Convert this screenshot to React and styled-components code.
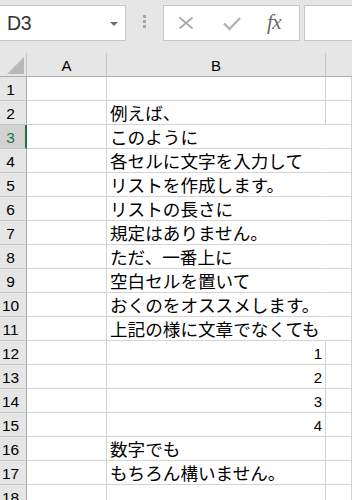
import React from "react";
import styled, { createGlobalStyle } from "styled-components";

const Global = createGlobalStyle`
  html, body { margin: 0; padding: 0; background: #ffffff; overflow: hidden; }
  * { box-sizing: border-box; }
`;

const Sheet = styled.div`
  width: 352px;
  height: 500px;
  overflow: hidden;
  background: #ffffff;
  font-family: "Liberation Sans", Arial, sans-serif;
`;

const TopBar = styled.div`
  height: 53px;
  background: #e6e6e6;
  display: flex;
  align-items: flex-start;
  padding-top: 5px;
`;

const NameBox = styled.div`
  width: 126px;
  height: 36px;
  background: #ffffff;
  border: 1px solid #c6c6c6;
  border-left: none;
  display: flex;
  align-items: center;
  justify-content: space-between;
  padding: 0 7px 0 7px;
  color: #333333;
  font-size: 19.5px;
  letter-spacing: -0.3px;
`;

const DropArrow = styled.span`
  width: 0;
  height: 0;
  border-left: 4px solid transparent;
  border-right: 4px solid transparent;
  border-top: 4px solid #6e6e6e;
  margin-top: 2px;
`;

const Grip = styled.div`
  width: 37px;
  height: 36px;
  display: flex;
  flex-direction: column;
  align-items: center;
  justify-content: center;
  gap: 2px;
  padding-right: 1px;
  padding-bottom: 3px;
`;

const GripDot = styled.span`
  width: 3px;
  height: 3px;
  background: #a6a6a6;
`;

const FormulaBox = styled.div`
  width: 137px;
  height: 36px;
  background: #ffffff;
  border: 1px solid #c6c6c6;
  display: flex;
  align-items: center;
  padding-left: 14px;
  gap: 0;
`;

const IconSlot = styled.div`
  width: ${(p) => p.$w}px;
  display: flex;
  align-items: center;
  justify-content: flex-start;
`;

const Fx = styled.span`
  font-family: "Liberation Serif", "DejaVu Serif", serif;
  font-style: italic;
  font-size: 21px;
  color: #6a6a6a;
  margin-top: -2px;
  letter-spacing: -0.5px;
`;

const InputBox = styled.div`
  flex: 1;
  height: 36px;
  margin-left: 4px;
  background: #ffffff;
  border: 1px solid #c6c6c6;
  border-right: none;
`;

const COLS = "27px 80px 219px 1fr";

const HeaderRow = styled.div`
  display: grid;
  grid-template-columns: ${COLS};
  height: 24px;
  background: #e6e6e6;
  border-bottom: 1px solid #ababab;
`;

const Corner = styled.div`
  position: relative;
  border-right: 1px solid #c6c6c6;
`;

const CornerTri = styled.span`
  position: absolute;
  right: 2px;
  bottom: 2px;
  width: 0;
  height: 0;
  border-left: 17px solid transparent;
  border-bottom: 17px solid #b8b8b8;
`;

const ColHead = styled.div`
  border-right: ${(p) => (p.$last ? "none" : "1px solid #c6c6c6")};
  display: flex;
  align-items: center;
  justify-content: center;
  font-size: 15px;
  color: #000000;
  padding-top: 2px;
`;

const Row = styled.div`
  display: grid;
  grid-template-columns: ${COLS};
  height: 24px;
`;

const RowHead = styled.div`
  background: ${(p) => (p.$sel ? "#d2d2d2" : "#e6e6e6")};
  border-right: ${(p) => (p.$sel ? "2px solid #217346" : "1px solid #ababab")};
  border-bottom: 1px solid #c4c4c4;
  color: ${(p) => (p.$sel ? "#217346" : "#000000")};
  font-size: 15.5px;
  display: flex;
  align-items: center;
  justify-content: center;
  padding-right: ${(p) => (p.$sel ? "4px" : "5px")};
  padding-top: 2px;
`;

const Cell = styled.div`
  border-right: ${(p) => (p.$noRight ? "1px solid transparent" : "1px solid #d4d4d4")};
  border-bottom: 1px solid #d4d4d4;
  display: flex;
  align-items: center;
  justify-content: ${(p) => (p.$num ? "flex-end" : "flex-start")};
  padding: 1px 3px 0 3px;
  white-space: nowrap;
  overflow: visible;
  position: relative;
  z-index: ${(p) => (p.$text ? 1 : 0)};
  font-family: ${(p) =>
    p.$num
      ? '"Liberation Sans", Arial, sans-serif'
      : '"Noto Sans CJK JP", "Noto Sans CJK SC", sans-serif'};
  font-size: ${(p) => (p.$num ? "15px" : "17.6px")};
  line-height: 1;
  color: #000000;
`;

const CrossIcon = () => (
  <svg width="16" height="14" viewBox="0 0 16 14">
    <path d="M1.5 1.5 L14.5 12.5 M14.5 1.5 L1.5 12.5" stroke="#ababab" strokeWidth="1.8" fill="none" />
  </svg>
);

const CheckIcon = () => (
  <svg width="18" height="15" viewBox="0 0 18 15">
    <path d="M1 7.5 L6.5 13 L17 2" stroke="#b3b3b3" strokeWidth="2.4" fill="none" />
  </svg>
);

const rows = [
  { b: "" },
  { b: "例えば、" },
  { b: "このように", sel: true },
  { b: "各セルに文字を入力して" },
  { b: "リストを作成します。" },
  { b: "リストの長さに" },
  { b: "規定はありません。" },
  { b: "ただ、一番上に" },
  { b: "空白セルを置いて" },
  { b: "おくのをオススメします。" },
  { b: "上記の様に文章でなくても" },
  { b: "1", num: true },
  { b: "2", num: true },
  { b: "3", num: true },
  { b: "4", num: true },
  { b: "数字でも" },
  { b: "もちろん構いません。" },
  { b: "" },
];

export default function App() {
  return (
    <Sheet>
      <Global />
      <TopBar>
        <NameBox>
          <span>D3</span>
          <DropArrow />
        </NameBox>
        <Grip>
          <GripDot />
          <GripDot />
          <GripDot />
        </Grip>
        <FormulaBox>
          <IconSlot $w={45}>
            <CrossIcon />
          </IconSlot>
          <IconSlot $w={44}>
            <CheckIcon />
          </IconSlot>
          <IconSlot $w={30}>
            <Fx>fx</Fx>
          </IconSlot>
        </FormulaBox>
        <InputBox />
      </TopBar>
      <HeaderRow>
        <Corner>
          <CornerTri />
        </Corner>
        <ColHead>A</ColHead>
        <ColHead>B</ColHead>
        <ColHead $last />
      </HeaderRow>
      {rows.map((r, i) => {
        const n = i + 1;
        const hide = n >= 3 && n <= 11;
        return (
          <Row key={n}>
            <RowHead $sel={r.sel}>{n}</RowHead>
            <Cell />
            <Cell $num={r.num} $text={!!r.b} $noRight={hide}>
              {r.b}
            </Cell>
            <Cell />
          </Row>
        );
      })}
    </Sheet>
  );
}
